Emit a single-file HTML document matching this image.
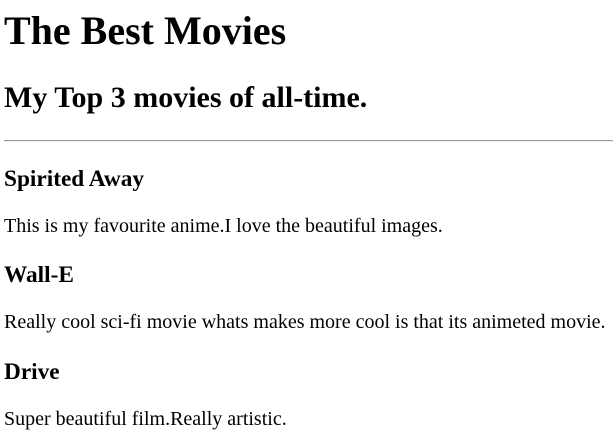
<!DOCTYPE html>
<html><head><style>
body{margin:0;width:613px;height:432px;overflow:hidden;background:#fff;font-family:"Liberation Serif",serif;color:#000;position:relative}
div{position:absolute;left:4px;white-space:nowrap}
.h1{font-size:40px;font-weight:bold;line-height:40px;top:10.5px}
.h2{font-size:30px;font-weight:bold;line-height:30px;top:82.9px}
.h3{font-size:23.3px;font-weight:bold;line-height:23.3px}
.p{font-size:20px;line-height:20px}
hr{position:absolute;left:4px;right:0;top:140px;margin:0;border:0;border-top:1px solid #9a9a9a;border-bottom:1px solid #eee;height:0}
</style></head><body>
<div class="h1">The Best Movies</div>
<div class="h2">My Top 3 movies of all-time.</div>
<hr>
<div class="h3" style="top:167.5px">Spirited Away</div>
<div class="p" style="top:216.3px">This is my favourite anime.I love the beautiful images.</div>
<div class="h3" style="top:263.5px">Wall-E</div>
<div class="p" style="top:312.3px">Really cool sci-fi movie whats makes more cool is that its animeted movie.</div>
<div class="h3" style="top:360.5px">Drive</div>
<div class="p" style="top:409.3px">Super beautiful film.Really artistic.</div>
</body></html>
